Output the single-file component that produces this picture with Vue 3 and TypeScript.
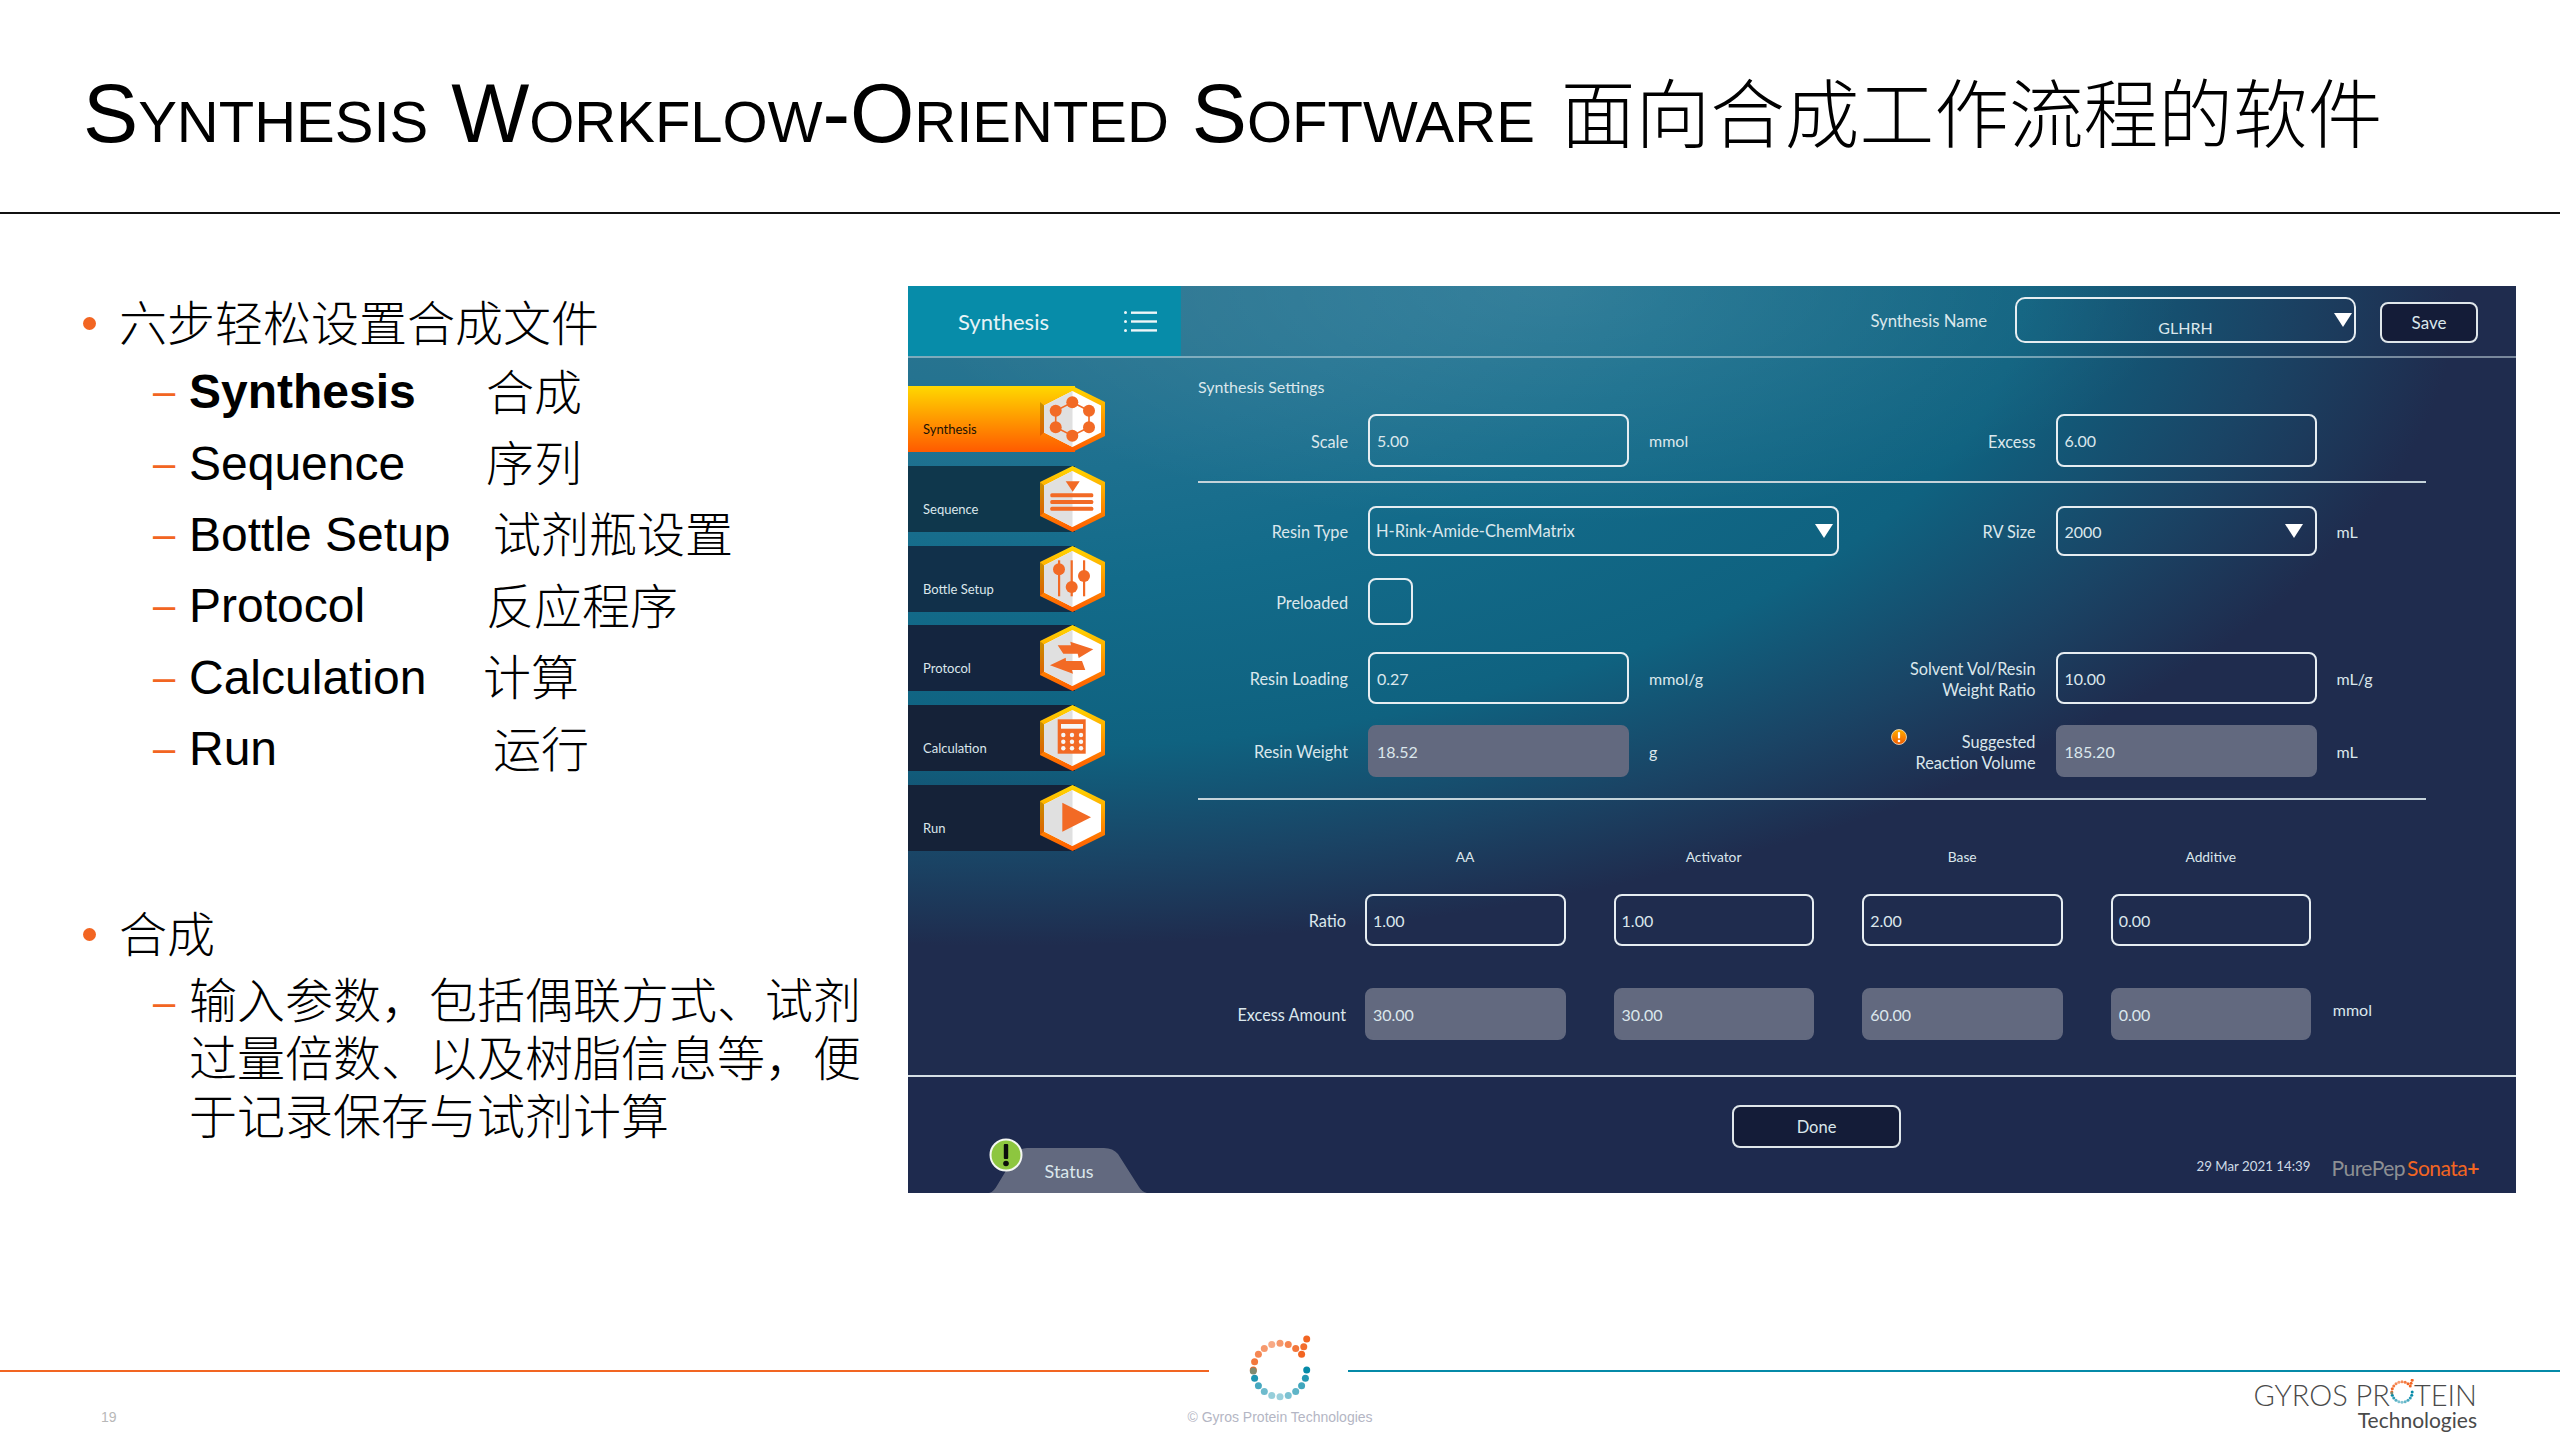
<script setup lang="ts">
interface Dot { x: number; y: number; fill: string; o: number }
const termRows = [
  { en: 'Synthesis', zh: '合成', at: 297, bold: true },
  { en: 'Sequence', zh: '序列', at: 297, bold: false },
  { en: 'Bottle Setup', zh: '试剂瓶设置', at: 304, bold: false },
  { en: 'Protocol', zh: '反应程序', at: 297, bold: false },
  { en: 'Calculation', zh: '计算', at: 294, bold: false },
  { en: 'Run', zh: '运行', at: 304, bold: false },
]
const nav = ['Synthesis', 'Sequence', 'Bottle Setup', 'Protocol', 'Calculation', 'Run']
const heads = ['AA', 'Activator', 'Base', 'Additive']
const ratios = ['1.00', '1.00', '2.00', '0.00']
const amounts = ['30.00', '30.00', '60.00', '0.00']

function ring(cx: number, cy: number, r: number): Dot[] {
  const out: Dot[] = []
  for (let i = 0; i <= 8; i++) {
    const a = Math.PI + (i * Math.PI) / 10.0
    const dist = Math.abs(i - 4) / 4
    out.push({ x: cx + r * Math.cos(a), y: cy + r * Math.sin(a), fill: '#f26522', o: 0.55 + 0.45 * dist })
  }
  out.push({ x: cx + r * 0.89, y: cy - r * 0.87, fill: '#f26522', o: 0.95 })
  out.push({ x: cx + r * 1, y: cy - r * 1.16, fill: '#f26522', o: 1 })
  for (let i = 0; i <= 9; i++) {
    const a = (i * Math.PI) / 10.0
    out.push({ x: cx + r * Math.cos(a), y: cy + r * Math.sin(a), fill: '#058aa8', o: 1 - (i < 6 ? i * 0.12 : (9 - i) * 0.16 + 0.1) })
  }
  out.push({ x: cx + r * Math.cos(Math.PI), y: cy + 1, fill: '#7f8a70', o: 1 })
  return out
}
const bigRing = ring(35, 35, 26.7)
const smallRing = ring(13, 13, 10.2).map((d) => ({ ...d, o: Math.min(1, d.o + 0.1) }))
</script>

<template>
  <div class="slide">
    <header class="head">
      <h1 class="title">Synthesis Workflow-Oriented Software <span class="title-zh">面向合成工作流程的软件</span></h1>
    </header>

    <div class="body">
      <div class="left">
        <div class="lvl1"><i class="dot"></i><span>六步轻松设置合成文件</span></div>
        <div class="terms">
          <div v-for="t in termRows" :key="t.en" class="term">
            <i class="dash">–</i>
            <span class="en" :class="{ strong: t.bold }" :style="{ width: t.at + 'px' }">{{ t.en }}</span>
            <span class="zh">{{ t.zh }}</span>
          </div>
        </div>
        <div class="lvl1 second"><i class="dot"></i><span>合成</span></div>
        <div class="para">
          <i class="dash">–</i>
          <p>输入参数，包括偶联方式、试剂过量倍数、以及树脂信息等，便于记录保存与试剂计算</p>
        </div>
      </div>

      <section class="panel">
        <div class="top">
          <div class="side-title">
            <span>Synthesis</span>
            <svg class="menu" viewBox="0 0 33 21" width="33" height="21">
              <g fill="#eef6f8">
                <rect x="0" y="0" width="3" height="3" rx="1.5" />
                <rect x="0" y="9" width="3" height="3" rx="1.5" />
                <rect x="0" y="18" width="3" height="3" rx="1.5" />
                <rect x="7" y="0.5" width="26" height="2.4" />
                <rect x="7" y="9.3" width="26" height="2.4" />
                <rect x="7" y="18.2" width="26" height="2.4" />
              </g>
            </svg>
          </div>
          <div class="top-right">
            <span class="name-label">Synthesis Name</span>
            <div class="name-select">
              <span>GLHRH</span>
              <svg class="abs" viewBox="0 0 18 14" width="18" height="14"><path d="M0 0H18L9 14Z" fill="#fff" /></svg>
            </div>
            <div class="btn save">Save</div>
          </div>
        </div>

        <div class="middle">
          <nav class="side">
            <div v-for="(n, i) in nav" :key="n" class="nav" :class="{ active: i === 0 }">
              <span class="nav-label">{{ n }}</span>
              <svg class="hex" viewBox="0 0 65 66" width="65" height="66">
                <defs>
                  <linearGradient :id="'edge' + i" x1="0" y1="0" x2="0" y2="1">
                    <stop offset="0" stop-color="#ffd800" />
                    <stop offset="1" stop-color="#ff5a00" />
                  </linearGradient>
                  <linearGradient :id="'shade' + i" x1="0" y1="0" x2="0" y2="1">
                    <stop offset="0" stop-color="#c79000" />
                    <stop offset="1" stop-color="#e06000" />
                  </linearGradient>
                </defs>
                <polygon points="32.5,0 65,16 65,50 32.5,66 0,50 0,16" :fill="'url(#edge' + i + ')'" />
                <polygon points="0,16 4,19.5 4,46.5 0,50" :fill="'url(#shade' + i + ')'" />
                <polygon points="32.5,5 61,19.5 61,46.5 32.5,61 4,46.5 4,19.5" fill="#fff" />
                <polygon points="32.5,5 32.5,61 4,46.5 4,19.5" fill="#e0e0e0" />
                <g v-if="i === 0" fill="#f26a25" stroke="none">
                  <polygon points="32.3,16.3 49,24.7 49,41.3 32.3,49.7 15.7,41.3 15.7,24.7" fill="none" stroke="#f26a25" stroke-width="1.6" />
                  <circle cx="32.3" cy="16.3" r="6" />
                  <circle cx="49" cy="24.7" r="6" />
                  <circle cx="49" cy="41.3" r="6" />
                  <circle cx="32.3" cy="49.7" r="6" />
                  <circle cx="15.7" cy="41.3" r="6" />
                  <circle cx="15.7" cy="24.7" r="6" />
                </g>
                <g v-else-if="i === 1" fill="#f26a25">
                  <polygon points="25.7,15.3 39.7,15.3 32.7,25.7" />
                  <rect x="10.3" y="27.3" width="43" height="4" rx="1.5" />
                  <rect x="10.3" y="34" width="43" height="4" rx="1.5" />
                  <rect x="10.3" y="40.7" width="43" height="4" rx="1.5" />
                </g>
                <g v-else-if="i === 2" fill="#f26a25">
                  <rect x="18" y="14.3" width="2.2" height="36" />
                  <rect x="30.6" y="14.3" width="2.2" height="36" />
                  <rect x="43" y="14.3" width="2.2" height="36" />
                  <circle cx="19" cy="23.3" r="6" />
                  <circle cx="31.7" cy="41" r="6" />
                  <circle cx="44" cy="30" r="6" />
                </g>
                <g v-else-if="i === 3" fill="#f26a25">
                  <polygon points="17.7,20.3 31,20.3 30.3,16.7 53.3,24.3 38.7,33 37.7,28.7 23.3,28.7" />
                  <polygon points="10,40.3 25.7,32.7 26,36 42,36 45.3,45 32,45 33,48.7" />
                </g>
                <g v-else-if="i === 4">
                  <rect x="17.7" y="14.3" width="28" height="34.4" fill="#f26a25" />
                  <rect x="21" y="19" width="22" height="4.7" fill="#f6f6f6" />
                  <g fill="#f6f6f6">
                    <circle v-for="p in [[23.3,30],[32,30],[41,30],[23.3,36.7],[32,36.7],[41,36.7],[23.3,43.3],[32,43.3],[41,43.3]]" :key="p.join()" :cx="p[0]" :cy="p[1]" r="2.2" />
                  </g>
                </g>
                <polygon v-else points="22.3,17.7 22.3,46.7 51,32.3" fill="#f26a25" />
              </svg>
            </div>
          </nav>

          <div class="form">
            <div class="settings">Synthesis Settings</div>

            <div class="row r1">
              <label class="lab">Scale</label>
              <div class="inp">5.00</div>
              <span class="unit">mmol</span>
              <label class="lab">Excess</label>
              <div class="inp">6.00</div>
            </div>
            <div class="rule d1"></div>
            <div class="row r2">
              <label class="lab">Resin Type</label>
              <div class="inp wide">
                <span>H-Rink-Amide-ChemMatrix</span>
                <svg class="arrow resin" viewBox="0 0 18 14" width="18" height="14"><path d="M0 0H18L9 14Z" fill="#fff" /></svg>
              </div>
              <label class="lab">RV Size</label>
              <div class="inp">
                <span>2000</span>
                <svg class="arrow rv" viewBox="0 0 18 14" width="18" height="14"><path d="M0 0H18L9 14Z" fill="#fff" /></svg>
              </div>
              <span class="unit">mL</span>
            </div>
            <div class="row r3">
              <label class="lab">Preloaded</label>
              <div class="inp check"></div>
            </div>
            <div class="row r4">
              <label class="lab">Resin Loading</label>
              <div class="inp">0.27</div>
              <span class="unit">mmol/g</span>
              <label class="lab two">Solvent Vol/Resin<br />Weight Ratio</label>
              <div class="inp">10.00</div>
              <span class="unit">mL/g</span>
            </div>
            <div class="row r5">
              <label class="lab">Resin Weight</label>
              <div class="inp grey">18.52</div>
              <span class="unit">g</span>
              <label class="lab warnlab">
                <svg class="warn" viewBox="0 0 16 16" width="16" height="16">
                  <defs>
                    <linearGradient id="wg" x1="0" y1="0" x2="0" y2="1">
                      <stop offset="0" stop-color="#ffb000" />
                      <stop offset="1" stop-color="#f25a00" />
                    </linearGradient>
                  </defs>
                  <circle cx="8" cy="8" r="7.5" fill="url(#wg)" stroke="#f4e3c8" stroke-width="0.8" />
                  <rect x="6.9" y="3" width="2.2" height="6.5" rx="1" fill="#fff" />
                  <circle cx="8" cy="12" r="1.3" fill="#fff" />
                </svg>
                <span class="two">Suggested<br />Reaction Volume</span>
              </label>
              <div class="inp grey">185.20</div>
              <span class="unit">mL</span>
            </div>
            <div class="rule d2"></div>

            <div class="reagents heads">
              <span></span>
              <span v-for="h in heads" :key="h" class="cell-head">{{ h }}</span>
            </div>
            <div class="reagents g1">
              <label class="lab">Ratio</label>
              <div v-for="(r, i) in ratios" :key="i" class="inp small">{{ r }}</div>
            </div>
            <div class="reagents g2">
              <label class="lab">Excess Amount</label>
              <div v-for="(a, i) in amounts" :key="i" class="inp small grey">{{ a }}</div>
              <span class="unit up">mmol</span>
            </div>
          </div>
        </div>

        <div class="bar">
          <div class="status">
            <svg class="badge" viewBox="0 0 34 34" width="34" height="34">
              <circle cx="17" cy="17" r="15.5" fill="#8dc63f" stroke="#f4f7f2" stroke-width="2" />
              <rect x="14.8" y="6" width="4.4" height="15" rx="1" fill="#0c0c0c" />
              <circle cx="17" cy="25.5" r="2.8" fill="#0c0c0c" />
            </svg>
            <span>Status</span>
          </div>
          <div class="btn done">Done</div>
          <span class="date">29 Mar 2021 14:39</span>
          <span class="brand"><b>PurePep</b><em>Sonata</em><strong>+</strong></span>
        </div>
      </section>
    </div>

    <footer class="foot">
      <div class="f-left">
        <div class="line orange"></div>
        <span class="page">19</span>
      </div>
      <div class="f-mid">
        <svg viewBox="0 0 70 70" width="70" height="70">
          <circle v-for="(d, i) in bigRing" :key="i" :cx="d.x" :cy="d.y" r="3.5" :fill="d.fill" :opacity="d.o" />
        </svg>
        <span class="copy">© Gyros Protein Technologies</span>
      </div>
      <div class="f-right">
        <div class="line teal"></div>
        <div class="logo">
          <div class="logo-main">GYROS PR<svg class="logo-o" viewBox="0 0 26 26" width="26" height="26"><circle v-for="(d, i) in smallRing" :key="i" :cx="d.x" :cy="d.y" r="1.5" :fill="d.fill" :opacity="d.o" /></svg>TEIN</div>
          <div class="logo-sub">Technologies</div>
        </div>
      </div>
    </footer>
  </div>
</template>

<style>
html, body { margin: 0; background: #fff; }
</style>

<style scoped>
.slide {
  width: 2560px;
  height: 1440px;
  display: flex;
  flex-direction: column;
  background: #fff;
  color: #000;
  font-family: "Liberation Sans", "Noto Sans CJK SC", sans-serif;
  overflow: hidden;
}
.head {
  height: 212px;
  border-bottom: 2px solid #111;
  box-sizing: content-box;
  padding-left: 83px;
  display: flex;
  align-items: flex-start;
}
.title {
  margin: 71px 0 0;
  font-size: 82.7px;
  line-height: 86px;
  font-weight: 400;
  font-variant: small-caps;
  white-space: nowrap;
}
.title-zh { font-variant: normal; font-weight: 300; font-size: 74.7px; margin-left: 3px; }

.body { display: flex; flex: none; height: 1116px; }
.left { width: 908px; padding: 79px 0 0 83px; box-sizing: border-box; flex: none; font-size: 48px; }
.lvl1 { display: flex; align-items: center; height: 60px; font-weight: 300; }
.lvl1 span { padding-bottom: 6px; }
.dot { width: 13px; height: 13px; border-radius: 50%; background: #f26522; margin-right: 23px; flex: none; }
.terms { margin-top: 3px; }
.term { display: flex; align-items: center; height: 71.4px; padding-left: 70px; }
.dash { width: 36px; font-style: normal; color: #f26522; flex: none; font-size: 40px; }
.en { flex: none; white-space: nowrap; }
.en.strong { font-weight: 700; }
.zh { font-weight: 300; white-space: nowrap; padding-bottom: 6px; }
.second { margin-top: 120px; }
.para { display: flex; margin-top: 9px; padding-left: 70px; align-items: flex-start; line-height: 58px; }
.para p { margin: 0; width: 680px; font-weight: 300; }

.panel {
  flex: none;
  width: 1608px;
  height: 907px;
  margin-top: 72px;
  display: flex;
  flex-direction: column;
  color: #dbe7ec;
  font-family: Lato, "Noto Sans", sans-serif;
  background:
    radial-gradient(640px 240px at 640px 0, rgba(255, 255, 255, 0.12), rgba(255, 255, 255, 0)),
    radial-gradient(1450px 660px at 100px 0, #2e7690 0, #1f7190 25%, #136b8a 45%, #0f6280 70%, #1a4465 87%, #1f2c4e 100%) #1f2c4e;
}
.top { display: flex; height: 72px; flex: none; border-bottom: 2px solid rgba(210, 225, 232, 0.5); box-sizing: border-box; }
.side-title {
  width: 273px;
  background: #078ca9;
  display: flex;
  align-items: center;
  padding: 0 24px 0 50px;
  box-sizing: border-box;
  justify-content: space-between;
  font-size: 22px;
  color: #e8f3f6;
}
.top-right { flex: 1; display: flex; align-items: flex-start; }
.name-label { margin: 25px 0 0 626px; width: 180px; font-size: 16.7px; text-align: right; }
.name-select {
  margin: 11px 0 0 28px;
  width: 341px;
  height: 46px;
  box-sizing: border-box;
  border: 2px solid #e6edf1;
  border-radius: 10px;
  text-align: center;
  padding-top: 19px;
  font-size: 16px;
  line-height: 20px;
  position: relative;
}
.abs { position: absolute; right: 2px; top: 14px; }
.btn {
  background: #141c38;
  border: 2px solid #dfe6ea;
  border-radius: 8px;
  box-sizing: border-box;
  display: flex;
  align-items: center;
  justify-content: center;
  font-size: 16.5px;
}
.save { width: 98px; height: 41px; margin: 16px 0 0 24px; font-size: 17px; }

.middle { display: flex; height: 717px; flex: none; }
.side { width: 273px; flex: none; padding-top: 28px; display: flex; flex-direction: column; gap: 13.8px; box-sizing: border-box; }
.nav { display: flex; width: 167px; height: 66px; padding-left: 15px; box-sizing: border-box; font-size: 13px; }
.nav:nth-child(2) { background: #0f374c; }
.nav:nth-child(3) { background: #11304a; }
.nav:nth-child(4) { background: #14253f; }
.nav:nth-child(5) { background: #152238; }
.nav:nth-child(6) { background: #152238; }
.nav.active { background: linear-gradient(#ffd800, #ff5a00); color: #1a1206; }
.nav-label { flex: 1; padding-top: 35px; line-height: 16px; white-space: nowrap; }
.hex { flex: none; margin-right: -30px; }

.form { flex: 1; display: flex; flex-direction: column; }
.settings { margin: 19px 0 0 17px; height: 20px; line-height: 20px; font-size: 16px; }
.row {
  display: grid;
  grid-template-columns: 167px 261px 190px 176.5px 261px auto;
  column-gap: 20px;
  align-items: stretch;
}
.lab { font-size: 16.3px; line-height: 21px; text-align: right; align-self: center; white-space: nowrap; margin-top: 1px; }
.inp {
  border: 2px solid #e6edf1;
  border-radius: 8px;
  box-sizing: border-box;
  padding: 0 7px;
  display: flex;
  align-items: center;
  justify-content: space-between;
  font-size: 16px;
}
.arrow { flex: none; margin-top: 0; }
.resin { margin-right: -3px; }
.rv { margin-right: 5px; }
.wide { grid-column: span 2; }
.wide span { font-size: 16.5px; margin-left: -1px; }
.unit { font-size: 16px; align-self: center; }
.grey { background: #62697f; border-color: #62697f; }
.check { width: 45px; }
.two { display: block; }
.warnlab { display: flex; justify-content: flex-end; gap: 9px; align-items: flex-start; align-self: center; }
.warnlab .warn { margin-top: -2px; flex: none; }
.r1 { margin-top: 17px; height: 53px; }
.r2 { margin-top: 23px; height: 50px; }
.r3 { margin-top: 22px; height: 47px; }
.r4 { margin-top: 27px; height: 52px; }
.r5 { margin-top: 21px; height: 52px; }
.rule { height: 2px; width: 1228px; margin-left: 17px; background: #c5d3da; flex: none; }
.d1 { margin-top: 14px; }
.d2 { margin-top: 21px; }
.reagents { display: grid; grid-template-columns: 184px 248.6px 248.6px 248.6px 222px auto; align-items: stretch; }
.heads { margin-top: 47px; height: 20px; }
.cell-head { width: 200px; text-align: center; font-size: 13.8px; line-height: 20px; }
.g1 { margin-top: 27px; height: 52px; }
.g2 { margin-top: 42px; height: 52px; }
.reagents .lab { padding-right: 19px; }
.small { width: 200.5px; padding: 0 6px; }
.up { margin-bottom: 10px; }

.bar {
  flex: none;
  height: 118px;
  box-sizing: border-box;
  border-top: 2px solid #d5dfe5;
  background: #1e2a4e;
  display: flex;
  align-items: flex-start;
  padding: 0 37px 0 81px;
}
.status {
  position: relative;
  width: 158px;
  height: 45px;
  margin-top: 71px;
  display: flex;
  justify-content: center;
  font-size: 18px;
}
.status::before {
  content: "";
  position: absolute;
  inset: 0;
  background: #62697f;
  clip-path: path("M0 45 C4 44 6 41 9 36 L27 6 Q31 0 38 0 L115 0 Q124 0 129 6 L150 39 Q153 44 158 45 Z");
}
.status span { position: relative; margin-top: 11px; padding-left: 2px; line-height: 24px; }
.badge { position: absolute; left: 0; top: -10px; z-index: 1; }
.done { width: 169px; height: 43px; margin: 28px 0 0 585px; }
.date { margin: 79px 0 0 auto; font-size: 13.3px; line-height: 20px; color: #cfdbe6; }
.brand { margin: 78px 0 0 21px; font-size: 21px; line-height: 26px; white-space: nowrap; letter-spacing: -0.5px; }
.brand b { font-weight: 400; color: #8d8f93; }
.brand em { font-style: normal; color: #f26522; margin-left: 2px; }
.brand strong { color: #f26522; font-weight: 700; }

.foot { flex: 1; display: grid; grid-template-columns: 1209px 139px 1fr; }
.line { height: 2px; margin-top: 0; }
.orange { background: #f26522; }
.teal { background: #058aa8; }
.f-left { padding-top: 40px; }
.page { display: block; margin: 37px 0 0 101px; font-size: 14px; line-height: 16px; color: #b8b8b8; }
.f-mid { display: flex; flex-direction: column; align-items: center; padding-top: 5px; padding-left: 3px; }
.f-mid svg { flex: none; overflow: visible; }
.copy { margin-top: 3px; line-height: 18px; font-size: 14px; color: #b4b6c4; white-space: nowrap; }
.f-right { padding-top: 40px; }
.logo { padding-right: 83px; margin-top: 8px; text-align: right; color: #4a4a4a; font-family: Lato, "Liberation Sans", sans-serif; }
.logo-main { display: flex; justify-content: flex-end; align-items: center; font-size: 29px; line-height: 30px; font-weight: 300; }
.logo-o { margin: -6px -1px 0 -1px; }
.logo-sub { font-size: 21px; line-height: 24px; margin-top: -2px; }
</style>
